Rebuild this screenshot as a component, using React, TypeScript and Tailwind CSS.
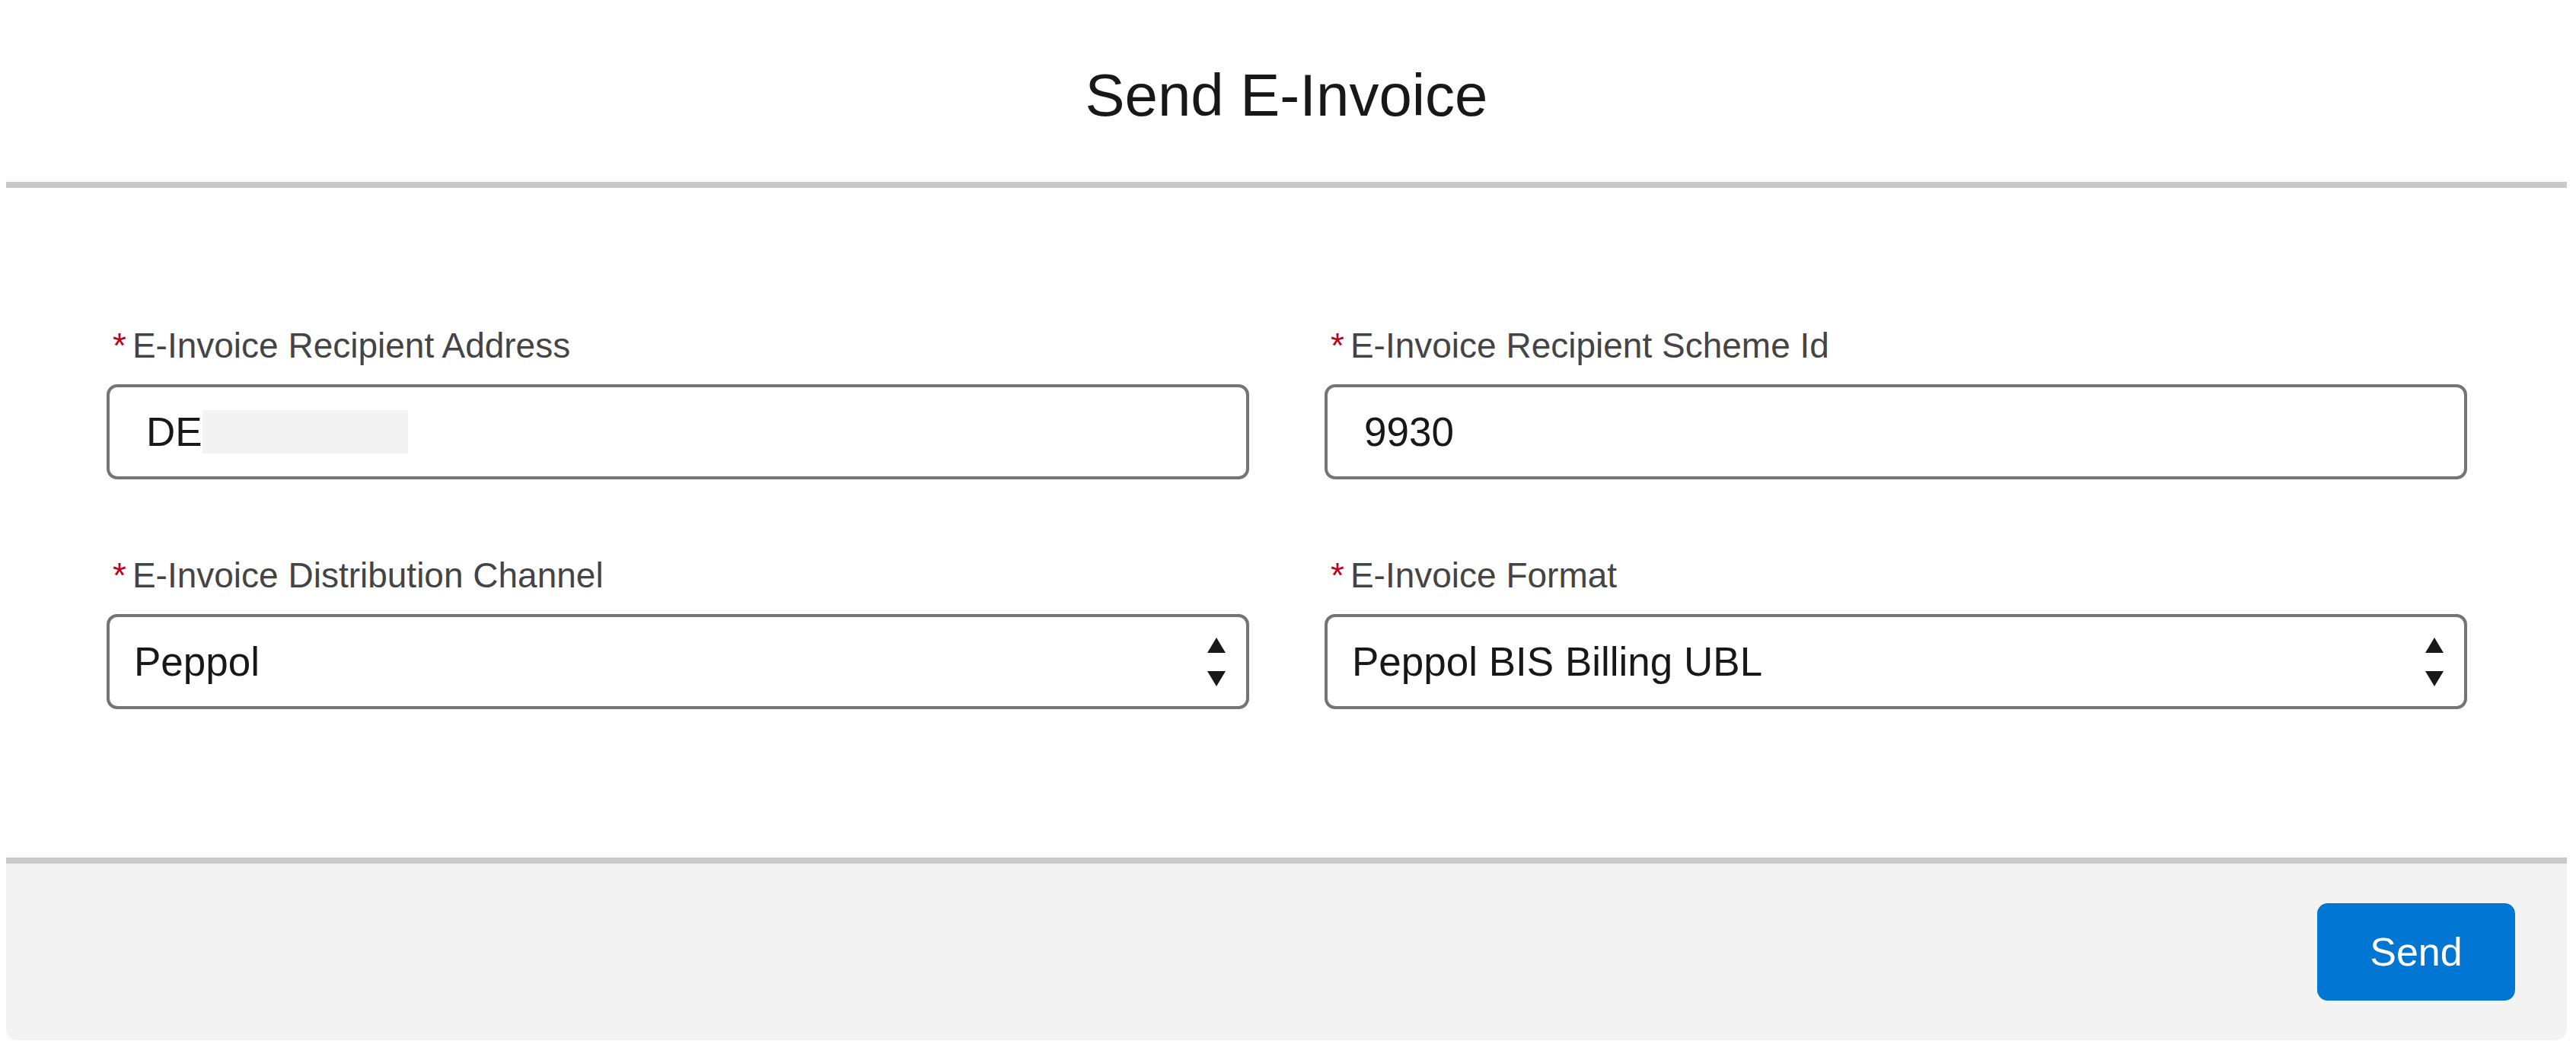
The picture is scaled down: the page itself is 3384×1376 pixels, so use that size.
import React from 'react';

const Required: React.FC<{ label: string }> = ({ label }) => (
  <div className="flex items-center h-[69px] mb-[16px] text-[46px] leading-[69px] text-[#444444]">
    <span className="text-[#ba0517] ml-[8px] mr-[8px]">*</span>
    <span>{label}</span>
  </div>
);

const SelectArrows = () => (
  <svg width="24" height="64" viewBox="0 0 24 64" className="shrink-0">
    <polygon points="12,0 24,20 0,20" fill="#181818" />
    <polygon points="0,44 24,44 12,64" fill="#181818" />
  </svg>
);

const fieldBox =
  'h-[125px] border-[4px] border-[#747474] rounded-[14px] bg-white flex items-center text-[53px] text-[#181818]';

export default function App() {
  return (
    <div className="min-h-screen bg-white font-['Liberation_Sans',Arial,sans-serif] pt-[11px] pl-[8px]">
      <div className="w-[3364px] h-[1356px] rounded-[14px] overflow-hidden flex flex-col bg-white">
        {/* Header */}
        <div className="h-[228px] flex items-center justify-center">
          <h2 className="text-[78px] text-[#181818] leading-none">Send E-Invoice</h2>
        </div>
        <div className="h-[8px] bg-[#c9c9c9]" />

        {/* Body */}
        <div className="h-[880px] pl-[132px] pr-[131px] pt-[173px]">
          <div className="grid grid-cols-2 gap-x-[99px] gap-y-[92px]">
            <div>
              <Required label="E-Invoice Recipient Address" />
              <div className={`${fieldBox} pl-[48px]`}>
                <span>DE</span>
                <span className="inline-block w-[270px] h-[57px] bg-[#f3f3f3]" />
              </div>
            </div>
            <div>
              <Required label="E-Invoice Recipient Scheme Id" />
              <div className={`${fieldBox} pl-[48px]`}>9930</div>
            </div>
            <div>
              <Required label="E-Invoice Distribution Channel" />
              <div className={`${fieldBox} pl-[32px] pr-[27px] justify-between`}>
                <span>Peppol</span>
                <SelectArrows />
              </div>
            </div>
            <div>
              <Required label="E-Invoice Format" />
              <div className={`${fieldBox} pl-[32px] pr-[27px] justify-between`}>
                <span>Peppol BIS Billing UBL</span>
                <SelectArrows />
              </div>
            </div>
          </div>
        </div>

        {/* Footer */}
        <div className="h-[8px] bg-[#c9c9c9]" />
        <div className="flex-1 bg-[#f3f3f3] flex items-center justify-end pr-[68px]">
          <button className="w-[260px] h-[128px] rounded-[14px] bg-[#0176d3] text-white text-[52px]">
            Send
          </button>
        </div>
      </div>
    </div>
  );
}
